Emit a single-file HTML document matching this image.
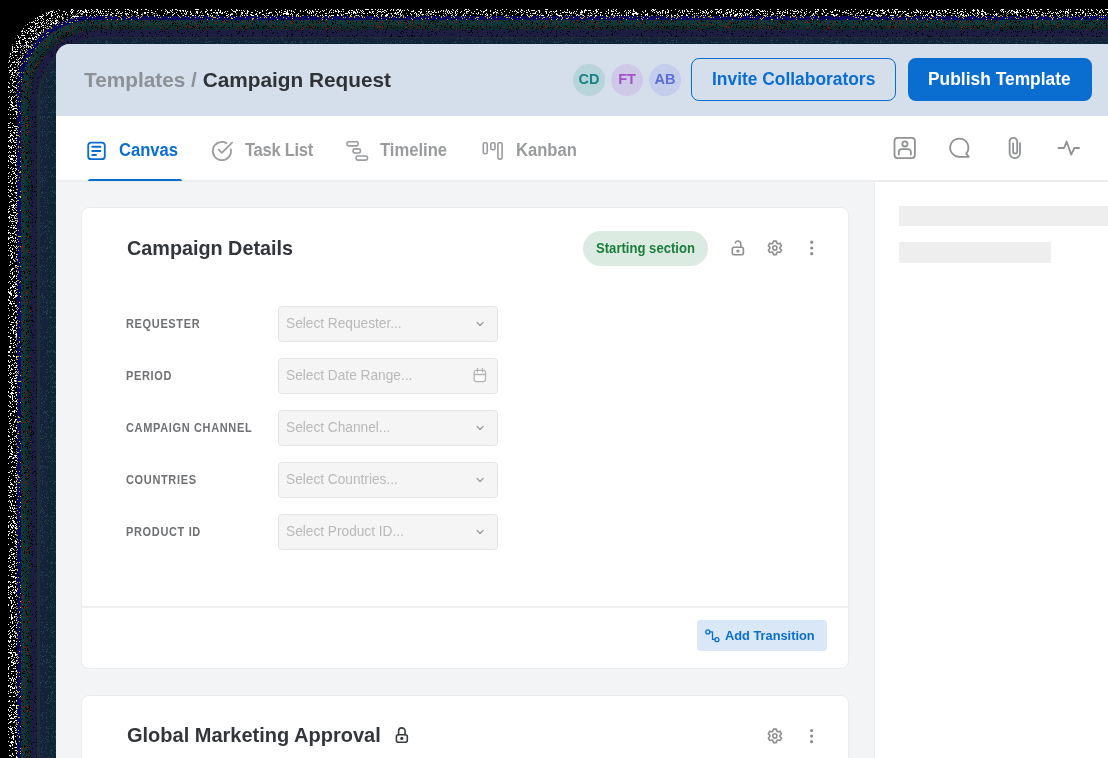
<!DOCTYPE html>
<html><head><meta charset="utf-8">
<style>
*{margin:0;padding:0;box-sizing:border-box}
html,body{width:1108px;height:758px;overflow:hidden;background:#000}
body{position:relative;font-family:"Liberation Sans",sans-serif}
.a{position:absolute}
.t{position:absolute;line-height:1;white-space:nowrap;font-weight:bold;will-change:transform}
.sl{transform:scaleY(1.17);transform-origin:0 84.65%;letter-spacing:0.65px}
.sy{transform:scaleY(1.1);transform-origin:0 84.65%}
.win{position:absolute;left:56px;top:44px;width:1100px;height:760px;border-top-left-radius:14px;overflow:hidden;background:#f3f4f6}
</style></head><body>
<div id="shadow"><svg class="a" style="left:0;top:0" width="1108" height="758">
<defs>
<filter id="nzw" filterUnits="userSpaceOnUse" x="0" y="0" width="1108" height="758" color-interpolation-filters="sRGB">
<feTurbulence type="fractalNoise" baseFrequency="2.2" numOctaves="1" seed="7" result="n"/>
<feColorMatrix in="n" type="matrix" values="0 0 0 0 1 0 0 0 0 1 0 0 0 0 1 20 0 0 0 -11.1" result="m"/>
<feComponentTransfer in="m" result="d"><feFuncA type="discrete" tableValues="0 1"/></feComponentTransfer>
<feComposite in="d" in2="SourceAlpha" operator="in"/>
</filter>
<filter id="nzg" filterUnits="userSpaceOnUse" x="0" y="0" width="1108" height="758" color-interpolation-filters="sRGB">
<feTurbulence type="fractalNoise" baseFrequency="2.2" numOctaves="1" seed="3" result="n"/>
<feColorMatrix in="n" type="matrix" values="0 0 0 0 0.55 0 0 0 0 0.55 0 0 0 0 0.5 20 0 0 0 -11.9" result="m"/>
<feComponentTransfer in="m" result="d"><feFuncA type="discrete" tableValues="0 1"/></feComponentTransfer>
<feComposite in="d" in2="SourceAlpha" operator="in"/>
</filter>
<filter id="nzy" filterUnits="userSpaceOnUse" x="0" y="0" width="1108" height="758" color-interpolation-filters="sRGB">
<feTurbulence type="fractalNoise" baseFrequency="2.2" numOctaves="1" seed="5" result="n"/>
<feColorMatrix in="n" type="matrix" values="0 0 0 0 0.8 0 0 0 0 0.75 0 0 0 0 0.1 20 0 0 0 -12.4" result="m"/>
<feComponentTransfer in="m" result="d"><feFuncA type="discrete" tableValues="0 1"/></feComponentTransfer>
<feComposite in="d" in2="SourceAlpha" operator="in"/>
</filter>
<filter id="nzd" filterUnits="userSpaceOnUse" x="0" y="0" width="1108" height="758" color-interpolation-filters="sRGB">
<feTurbulence type="fractalNoise" baseFrequency="2.2" numOctaves="1" seed="11" result="n"/>
<feColorMatrix in="n" type="matrix" values="0 0 0 0 0.02 0 0 0 0 0 0 0 0 0 0 20 0 0 0 -11.8" result="m"/>
<feComponentTransfer in="m" result="d"><feFuncA type="discrete" tableValues="0 1"/></feComponentTransfer>
<feComposite in="d" in2="SourceAlpha" operator="in"/>
</filter>
<filter id="nzr" filterUnits="userSpaceOnUse" x="0" y="0" width="1108" height="758" color-interpolation-filters="sRGB">
<feTurbulence type="fractalNoise" baseFrequency="2.2" numOctaves="1" seed="13" result="n"/>
<feColorMatrix in="n" type="matrix" values="0 0 0 0 0.45 0 0 0 0 0.1 0 0 0 0 0.1 20 0 0 0 -12.4" result="m"/>
<feComponentTransfer in="m" result="d"><feFuncA type="discrete" tableValues="0 1"/></feComponentTransfer>
<feComposite in="d" in2="SourceAlpha" operator="in"/>
</filter>
<filter id="nzk" filterUnits="userSpaceOnUse" x="0" y="0" width="1108" height="758" color-interpolation-filters="sRGB">
<feTurbulence type="fractalNoise" baseFrequency="2.2" numOctaves="1" seed="17" result="n"/>
<feColorMatrix in="n" type="matrix" values="0 0 0 0 0 0 0 0 0 0 0 0 0 0 0 20 0 0 0 -12.6" result="m"/>
<feComponentTransfer in="m" result="d"><feFuncA type="discrete" tableValues="0 1"/></feComponentTransfer>
<feComposite in="d" in2="SourceAlpha" operator="in"/>
</filter>
<filter id="nzb" filterUnits="userSpaceOnUse" x="0" y="0" width="1108" height="758" color-interpolation-filters="sRGB">
<feTurbulence type="fractalNoise" baseFrequency="2.2" numOctaves="1" seed="19" result="n"/>
<feColorMatrix in="n" type="matrix" values="0 0 0 0 0.02 0 0 0 0 0.02 0 0 0 0 0.2 20 0 0 0 -11.6" result="m"/>
<feComponentTransfer in="m" result="d"><feFuncA type="discrete" tableValues="0 1"/></feComponentTransfer>
<feComposite in="d" in2="SourceAlpha" operator="in"/>
</filter>
<filter id="nzt" filterUnits="userSpaceOnUse" x="0" y="0" width="1108" height="758" color-interpolation-filters="sRGB">
<feTurbulence type="fractalNoise" baseFrequency="2.2" numOctaves="1" seed="23" result="n"/>
<feColorMatrix in="n" type="matrix" values="0 0 0 0 0.12 0 0 0 0 0.25 0 0 0 0 0.3 20 0 0 0 -12.2" result="m"/>
<feComponentTransfer in="m" result="d"><feFuncA type="discrete" tableValues="0 1"/></feComponentTransfer>
<feComposite in="d" in2="SourceAlpha" operator="in"/>
</filter>
</defs>
<path d="M8 758V67A58 58 0 0 1 66 9H1108V758Z" fill="#000" filter="url(#nzw)"/>
<path d="M14 758V77A64 64 0 0 1 78 13H1108V758Z" fill="#000" filter="url(#nzg)"/>
<path d="M17 758V89A73 73 0 0 1 90 16H1108V758Z" fill="#0a0a66" />
<path d="M17 758V89A73 73 0 0 1 90 16H1108V758Z" fill="#000" filter="url(#nzb)"/>
<path d="M17 758V89A73 73 0 0 1 90 16H1108V758Z" fill="#000" filter="url(#nzy)"/>
<path d="M21 758V92A72 72 0 0 1 93 20H1108V758Z" fill="#0b3a3a" />
<path d="M25 758V95A70 70 0 0 1 95 25H1108V758Z" fill="#0a3232" />
<path d="M28 758V95A68 68 0 0 1 96 27H1108V758Z" fill="#0a2a2e" />
<path d="M21 758V92A72 72 0 0 1 93 20H1108V758Z" fill="#000" filter="url(#nzd)"/>
<path d="M21 758V92A72 72 0 0 1 93 20H1108V758Z" fill="#000" filter="url(#nzr)"/>
<path d="M31 758V98A68 68 0 0 1 99 30H1108V758Z" fill="#1d1c42" />
<path d="M31 758V98A68 68 0 0 1 99 30H1108V758Z" fill="#000" filter="url(#nzk)"/>
<path d="M37 758V102A65 65 0 0 1 102 37H1108V758Z" fill="#1b2f32" />
<path d="M40 758V98A60 60 0 0 1 100 38H1108V758Z" fill="#16223a" />
<path d="M48 758V91A50 50 0 0 1 98 41H1108V758Z" fill="#0f2536" />
<path d="M40 758V98A60 60 0 0 1 100 38H1108V758Z" fill="#000" filter="url(#nzt)"/>
</svg></div><!--/shadow-->
<div class="win"></div>
<!-- header -->
<div class="a" style="left:56px;top:44px;width:1052px;height:72px;background:#d5dfeb;border-top-left-radius:14px"></div>
<div class="t" style="left:84px;top:70px;font-size:20.8px;color:#8b9196">Templates / <span style="color:#2f3337">Campaign Request</span></div>
<!-- avatars -->
<div class="a" style="left:572.5px;top:63.5px;width:32px;height:32px;border-radius:50%;background:#b6d4d9"></div>
<div class="a" style="left:610.5px;top:63.5px;width:32px;height:32px;border-radius:50%;background:#cfc9e8"></div>
<div class="a" style="left:648.5px;top:63.5px;width:32px;height:32px;border-radius:50%;background:#c4cdeb"></div>
<div class="t" style="left:572.5px;top:72.2px;width:32px;text-align:center;font-size:14.5px;color:#1b8284">CD</div>
<div class="t" style="left:610.5px;top:72.2px;width:32px;text-align:center;font-size:14.5px;color:#a552c9">FT</div>
<div class="t" style="left:648.5px;top:72.2px;width:32px;text-align:center;font-size:14.5px;color:#5b6ed8">AB</div>
<!-- buttons -->
<div class="a" style="left:691px;top:58px;width:205px;height:43px;border:1.5px solid #0a6ed1;border-radius:8px"></div>
<div class="t sy" style="left:711.8px;top:70.6px;font-size:17.4px;color:#0a6ed1">Invite Collaborators</div>
<div class="a" style="left:908px;top:58px;width:184px;height:43px;background:#0a6ed1;border-radius:8px"></div>
<div class="t sy" style="left:928.4px;top:70.6px;font-size:17.4px;color:#fff">Publish Template</div>
<!-- tab bar -->
<div class="a" style="left:56px;top:116px;width:1052px;height:66px;background:#fff;border-bottom:2px solid #ebecee"></div>
<div class="a" style="left:88px;top:178.9px;width:94px;height:2.6px;background:#0a6ed1;border-radius:2px 2px 0 0"></div>
<div class="t" style="left:119px;top:142.9px;font-size:16.6px;transform:scaleY(1.05);transform-origin:0 84.65%;color:#0a6ed1">Canvas</div>
<div class="t" style="left:245px;top:142.9px;font-size:16.6px;transform:scaleY(1.05);transform-origin:0 84.65%;letter-spacing:-0.3px;color:#999b9d">Task List</div>
<div class="t" style="left:380px;top:142.9px;font-size:16.6px;transform:scaleY(1.05);transform-origin:0 84.65%;color:#999b9d">Timeline</div>
<div class="t" style="left:516px;top:142.9px;font-size:16.6px;transform:scaleY(1.05);transform-origin:0 84.65%;color:#999b9d">Kanban</div>
<!-- right panel -->
<div class="a" style="left:874px;top:182px;width:234px;height:577px;background:#fff;border-left:1px solid #ebecee"></div>
<div class="a" style="left:899px;top:206px;width:209px;height:20px;background:#eeeeee"></div>
<div class="a" style="left:899px;top:242px;width:152px;height:21px;background:#eeeeee"></div>
<!-- card 1 -->
<div class="a" style="left:81px;top:207px;width:768px;height:462px;background:#fff;border:1px solid #eaebec;border-radius:8px"></div>
<div class="a" style="left:82px;top:606px;width:766px;height:1.5px;background:#eeeff0"></div>
<div class="t" style="left:127px;top:238.6px;font-size:19.8px;color:#32363a">Campaign Details</div>
<div class="a" style="left:583px;top:231px;width:125px;height:35px;border-radius:18px;background:#dcebe1"></div>
<div class="t sy" style="left:595.7px;top:242.2px;font-size:13.1px;color:#1b7e3f">Starting section</div>
<div class="a" style="left:697px;top:620px;width:130px;height:31px;border-radius:4px;background:#d9e7f7"></div>
<div class="t" style="left:724.9px;top:630px;font-size:12.8px;color:#0a6ed1;transform:scaleY(1.05);transform-origin:0 84.65%">Add Transition</div>
<!-- card 2 -->
<div class="a" style="left:81px;top:695px;width:768px;height:200px;background:#fff;border:1px solid #eaebec;border-radius:8px"></div>
<div class="t" style="left:126.8px;top:725px;font-size:20px;color:#32363a">Global Marketing Approval</div>
<!-- form -->
<div class="t sl" style="left:126px;top:319.3px;font-size:11px;color:#6e7073">REQUESTER</div>
<div class="a" style="left:278px;top:306px;width:220px;height:36px;background:#f5f5f5;border:1px solid #e3e3e3;border-radius:4px"></div>
<div class="t sy" style="left:286px;top:317.0px;font-size:13.7px;font-weight:normal;color:#b9b9b9">Select Requester...</div>
<div class="t sl" style="left:126px;top:371.3px;font-size:11px;color:#6e7073">PERIOD</div>
<div class="a" style="left:278px;top:358px;width:220px;height:36px;background:#f5f5f5;border:1px solid #e3e3e3;border-radius:4px"></div>
<div class="t sy" style="left:286px;top:369.0px;font-size:13.7px;font-weight:normal;color:#b9b9b9">Select Date Range...</div>
<div class="t sl" style="left:126px;top:423.3px;font-size:11px;color:#6e7073">CAMPAIGN CHANNEL</div>
<div class="a" style="left:278px;top:410px;width:220px;height:36px;background:#f5f5f5;border:1px solid #e3e3e3;border-radius:4px"></div>
<div class="t sy" style="left:286px;top:421.0px;font-size:13.7px;font-weight:normal;color:#b9b9b9">Select Channel...</div>
<div class="t sl" style="left:126px;top:475.3px;font-size:11px;color:#6e7073">COUNTRIES</div>
<div class="a" style="left:278px;top:462px;width:220px;height:36px;background:#f5f5f5;border:1px solid #e3e3e3;border-radius:4px"></div>
<div class="t sy" style="left:286px;top:473.0px;font-size:13.7px;font-weight:normal;color:#b9b9b9">Select Countries...</div>
<div class="t sl" style="left:126px;top:527.3px;font-size:11px;color:#6e7073">PRODUCT ID</div>
<div class="a" style="left:278px;top:514px;width:220px;height:36px;background:#f5f5f5;border:1px solid #e3e3e3;border-radius:4px"></div>
<div class="t sy" style="left:286px;top:525.0px;font-size:13.7px;font-weight:normal;color:#b9b9b9">Select Product ID...</div>
<!-- icons -->
<svg class="a" style="left:0;top:0" width="1108" height="758" viewBox="0 0 1108 758" fill="none" stroke-linecap="round" stroke-linejoin="round">
<g stroke="#0a6ed1">
<rect x="88.2" y="142.6" width="16.6" height="16.6" rx="3" stroke-width="1.8"/>
<path d="M92.3 146.8H100.4M92.3 151H100.4M92.3 155.1H96" stroke-width="2"/>
</g>
<g stroke="#9b9c9e" stroke-width="1.8">
<path d="M226.45 143.12A9.1 9.1 0 1 0 230.86 149.42"/>
<path d="M218.7 149.6L221.8 152.8L232.1 142.6"/>
</g>
<g stroke="#9b9c9e" stroke-width="1.6">
<rect x="347" y="141.7" width="11.2" height="4.2" rx="1.6"/>
<rect x="353.1" y="148.9" width="7.3" height="4.1" rx="1.6"/>
<rect x="356.1" y="156" width="11.4" height="4.1" rx="1.6"/>
<rect x="483.3" y="142.7" width="3.9" height="11.1" rx="1.5"/>
<rect x="490.8" y="142.7" width="4.2" height="7.1" rx="1.5"/>
<rect x="497.9" y="142.7" width="4.2" height="16.4" rx="1.5"/>
</g>
<g stroke="#8f9193" stroke-width="1.8">
<rect x="894.5" y="137.9" width="20.4" height="20.2" rx="3"/>
<circle cx="904.9" cy="143.9" r="2.6"/>
<path d="M898.8 154.5V152.1a3 3 0 0 1 3-3h6.1a3 3 0 0 1 3 3V154.5"/>
<path d="M966.2 153.6A9.1 9.1 0 1 0 959.5 156.8H968.8Z"/>
<path d="M1020 143.2V152.9A5.2 5.2 0 0 1 1009.6 152.9V141.6A3.8 3.8 0 0 1 1017.2 141.6V151.5A2.02 2.02 0 0 1 1013.15 151.5V143.3"/>
<path d="M1058.4 148H1064.1L1066.6 141.5L1071.2 154.6L1074.4 148H1079.1"/>
</g>
<g stroke="#8e8e8e" stroke-width="1.6">
<rect x="732.3" y="247.2" width="11.1" height="7.6" rx="2"/>
<path d="M735.37 242.84A2.8 2.8 0 0 1 740.8 243.8V247"/>
<path d="M772.71 243.41 L773.58 241.13 L776.22 241.13 L777.09 243.41 L777.70 243.75 L780.11 243.37 L781.42 245.65 L779.89 247.55 L779.89 248.25 L781.42 250.15 L780.11 252.43 L777.70 252.05 L777.09 252.39 L776.22 254.67 L773.58 254.67 L772.71 252.39 L772.10 252.05 L769.69 252.43 L768.38 250.15 L769.91 248.25 L769.91 247.55 L768.38 245.65 L769.69 243.37 L772.10 243.75Z"/>
<circle cx="774.9" cy="247.9" r="2.1" stroke-width="1.5"/>
<path d="M772.71 731.41 L773.58 729.13 L776.22 729.13 L777.09 731.41 L777.70 731.75 L780.11 731.37 L781.42 733.65 L779.89 735.55 L779.89 736.25 L781.42 738.15 L780.11 740.43 L777.70 740.05 L777.09 740.39 L776.22 742.67 L773.58 742.67 L772.71 740.39 L772.10 740.05 L769.69 740.43 L768.38 738.15 L769.91 736.25 L769.91 735.55 L768.38 733.65 L769.69 731.37 L772.10 731.75Z"/>
<circle cx="774.9" cy="735.9" r="2.1" stroke-width="1.5"/>
</g>
<g fill="#8e8e8e">
<circle cx="737.9" cy="251" r="1.6"/>
<circle cx="811.7" cy="242.2" r="1.6"/><circle cx="811.7" cy="248" r="1.6"/><circle cx="811.7" cy="253.7" r="1.6"/>
<circle cx="811.6" cy="730.5" r="1.6"/><circle cx="811.6" cy="736.1" r="1.6"/><circle cx="811.6" cy="741.7" r="1.6"/>
</g>
<g stroke="#3a3e42" stroke-width="1.6">
<rect x="396.4" y="734.7" width="10.9" height="7.5" rx="2"/>
<path d="M398.6 734.7V731.15A3.25 3.25 0 0 1 405.1 731.15V734.7"/>
</g>
<circle cx="401.8" cy="738.4" r="1.6" fill="#3a3e42"/>
<g stroke="#9a9a9a" stroke-width="1.3">
<path d="M477 322.4L480.05 325.5L483.1 322.4"/>
<path d="M477 426.4L480.05 429.5L483.1 426.4"/>
<path d="M477 478.4L480.05 481.5L483.1 478.4"/>
<path d="M477 530.4L480.05 533.5L483.1 530.4"/>
</g>
<g stroke="#b4b4b4" stroke-width="1.3">
<rect x="474.2" y="370.3" width="11.3" height="11.3" rx="2" fill="#fbfbfb"/>
<path d="M474.2 374.5H485.5M477.5 368.4V371.8M482.4 368.4V371.8"/>
</g>
<g stroke="#0a6ed1" stroke-width="1.3">
<circle cx="707.8" cy="631.9" r="2"/>
<circle cx="716.9" cy="639.7" r="2"/>
<path d="M709.8 631.8H712.5V639.4H714.9"/>
</g>
</svg>
</body></html>
